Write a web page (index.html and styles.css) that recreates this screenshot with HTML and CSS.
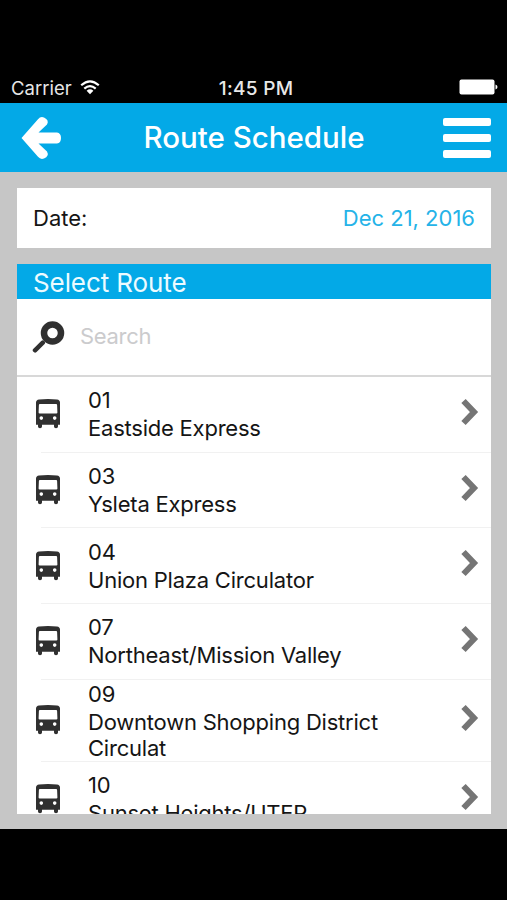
FILE: index.html
```
<!DOCTYPE html>
<html lang="en">

<head>
    <title>Route Schedule</title>
    <meta charset="UTF-8">
    <meta name="viewport" content="width=device-width, initial-scale=1.0">
    <link rel="stylesheet" href="styles.css">
</head>

<body>
    <!-- Icons that get used more than once. -->
    <svg class="sprites" width="0" height="0">
        <symbol id="bus" viewBox="0 0 26 30">
            <path fill-rule="evenodd" d="M4 .5Q13-.3 22 .5Q24.800 .8 25 3.500V25.700H23V27.500Q23 29.300 21 29.300T19 27.500V25.700H7V27.500Q7 29.300 5 29.300T3 27.500V25.700H1V3.500Q1.200 .8 4 .5ZM4.800 5Q4 5 3.900 5.900L3.600 13.600Q3.600 14.600 4.600 14.600H21.400Q22.400 14.600 22.400 13.600L22.100 5.900Q22 5 21.200 5ZM6.300 17.300A1.800 1.800 0 1 0 6.300 20.900A1.800 1.800 0 1 0 6.300 17.300ZM19.700 17.300A1.800 1.800 0 1 0 19.700 20.900A1.800 1.800 0 1 0 19.700 17.300Z" />
        </symbol>
        <symbol id="chevron" viewBox="0 0 18 28">
            <path d="M2.500 3L13 14L2.500 25" />
        </symbol>
    </svg>
    <div class="status">
        <span class="carrier">Carrier
            <svg class="wifi" width="20" height="15" viewBox="0 0 20 15">
                <path d="M1.200 5.300Q10-2.700 18.800 5.300M4.300 8.600Q10 3.500 15.700 8.600" />
                <path class="dot" d="M6.600 10.700Q10 7.800 13.400 10.700L10 14.300Z" />
            </svg>
        </span>
        <span class="clock">1:45 PM</span>
        <svg class="battery" width="39" height="16" viewBox="0 0 39 16">
            <rect x="0.500" y="0.500" width="35" height="15" rx="2" />
            <path d="M36.500 5.500Q38.500 6.200 38.500 8T36.500 10.500Z" />
        </svg>
    </div>
    <header class="navbar">
        <svg width="42" height="44" viewBox="0 0 42 44">
            <path d="M1.500 22L18 3.200Q20.500 .2 24 1.500Q29.500 4 27 8.500L18.500 16.500H37Q41 17 41 22T37 27.500H18.500L27 35.500Q29.500 40 24 42.500Q20.500 43.800 18 40.800Z" />
        </svg>
        <h1>Route Schedule</h1>
        <div class="menu"><i></i><i></i><i></i></div>
    </header>
    <main>
        <section class="date">
            <span>Date:</span>
            <time datetime="2016-12-21">Dec 21, 2016</time>
        </section>
        <section class="routes">
            <h2>Select Route</h2>
            <div class="search">
                <svg width="34" height="34" viewBox="0 0 34 34">
                    <circle cx="20.500" cy="13" r="8.500" />
                    <path d="M10.800 22.700L3 30.300" />
                </svg>
                <span>Search</span>
            </div>
            <ul>
                <li>
                    <svg class="bus"><use href="#bus" /></svg>
                    <div class="name"><b>01</b><p>Eastside Express</p></div>
                    <svg class="chevron"><use href="#chevron" /></svg>
                </li>
                <li>
                    <svg class="bus"><use href="#bus" /></svg>
                    <div class="name"><b>03</b><p>Ysleta Express</p></div>
                    <svg class="chevron"><use href="#chevron" /></svg>
                </li>
                <li>
                    <svg class="bus"><use href="#bus" /></svg>
                    <div class="name"><b>04</b><p>Union Plaza Circulator</p></div>
                    <svg class="chevron"><use href="#chevron" /></svg>
                </li>
                <li>
                    <svg class="bus"><use href="#bus" /></svg>
                    <div class="name"><b>07</b><p>Northeast/Mission Valley</p></div>
                    <svg class="chevron"><use href="#chevron" /></svg>
                </li>
                <li class="tall">
                    <svg class="bus"><use href="#bus" /></svg>
                    <div class="name"><b>09</b><p>Downtown Shopping District Circulat</p></div>
                    <svg class="chevron"><use href="#chevron" /></svg>
                </li>
                <li>
                    <svg class="bus"><use href="#bus" /></svg>
                    <div class="name"><b>10</b><p>Sunset Heights/UTEP</p></div>
                    <svg class="chevron"><use href="#chevron" /></svg>
                </li>
            </ul>
        </section>
    </main>
</body>

</html>
```
FILE: styles.css
```
* {
    box-sizing: border-box;
}

body {
    font-family: Inter, sans-serif;
    font-size: 22px;
    background: #000;
    color: #151515;
    margin: 0;
    height: 900px;
    overflow: hidden;
}

h1,
h2,
p,
ul {
    margin: 0;
    padding: 0;
}

svg {
    display: block;
    flex: none;
}

.sprites {
    position: absolute;
}

.status {
    display: grid;
    grid-template-columns: 1fr auto 1fr;
    align-items: center;
    height: 103px;
    padding: 73px 9px 0 11px;
    color: #e8e8e8;
    font-size: 18.5px;
}

.carrier {
    display: flex;
    align-items: center;
    gap: 8px;
}

.wifi {
    margin-top: -2px;
    fill: none;
    stroke: #fff;
    stroke-width: 2.2;
}

.wifi .dot {
    fill: #fff;
    stroke: none;
}

.clock {
    padding-left: 3px;
    font-size: 19px;
    font-weight: 500;
    letter-spacing: 0.3px;
}

.battery {
    margin-top: -2px;
    fill: #fff;
    justify-self: end;
}

/* Blue bar under the status line. */
.navbar {
    display: flex;
    align-items: center;
    justify-content: space-between;
    height: 69px;
    padding: 0 16px 0 20px;
    background: #03a9e7;
    color: #fff;
}

.navbar svg {
    margin-top: 1px;
    fill: #fff;
}

h1 {
    padding: 0 0 2px 3px;
    font-size: 29.5px;
    font-weight: 500;
}

.menu {
    display: flex;
    flex-direction: column;
    gap: 8px;
    width: 48px;
}

.menu i {
    height: 8px;
    border-radius: 2px;
    background: #fff;
}

main {
    display: flex;
    flex-direction: column;
    gap: 16px;
    height: 657px;
    padding: 16px 16px 15px 17px;
    background: #c6c6c6;
}

.date {
    display: flex;
    flex: none;
    align-items: center;
    justify-content: space-between;
    height: 60px;
    padding: 0 16px;
    background: #fff;
}

time {
    color: #25b3e8;
}

.routes {
    flex: 1;
    min-height: 0;
    overflow: hidden;
    background: #fff;
}

h2 {
    height: 35px;
    padding-left: 16px;
    background: #03a9e7;
    color: #ecfbff;
    font-size: 26px;
    font-weight: 400;
    letter-spacing: -0.1px;
    line-height: 37px;
}

.search {
    display: flex;
    align-items: center;
    gap: 14px;
    height: 78px;
    padding: 0 15px 2px;
    border-bottom: 2px solid #d8d8d8;
    color: #cbcbcd;
    letter-spacing: -0.3px;
}

.search svg {
    margin-top: 2px;
    fill: none;
    stroke: #303030;
    stroke-width: 6.5;
}

.search path {
    stroke-width: 4.5;
    stroke-linecap: round;
}

li {
    display: flex;
    align-items: center;
    height: 75.7px;
    padding: 0 12px 0 18px;
    /* The divider starts in from the left edge. */
    background: linear-gradient(#f1f1f1, #f1f1f1) 24px 100% / 100% 1px no-repeat;
}

.tall {
    height: 82px;
}

.bus {
    width: 26px;
    height: 30px;
    margin-top: -1px;
    fill: #303030;
}

.name {
    flex: 1;
    padding: 0 0 2px 27px;
    letter-spacing: -0.22px;
    line-height: 26px;
}

.tall .name {
    padding-bottom: 1px;
}

.name b {
    display: block;
    font-weight: 400;
    line-height: 29px;
}

.chevron {
    width: 18px;
    height: 28px;
    margin-top: -6px;
    fill: none;
    stroke: #757575;
    stroke-width: 6;
}
```
